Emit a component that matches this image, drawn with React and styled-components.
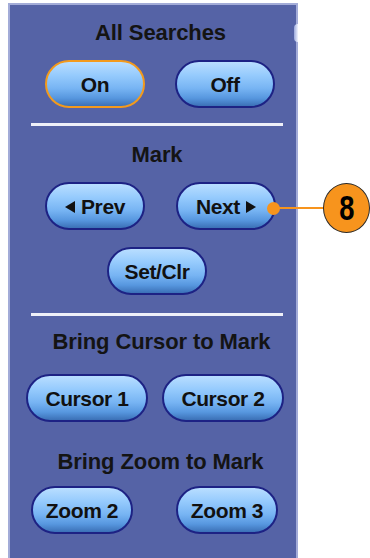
import React from "react";
import styled, { createGlobalStyle } from "styled-components";

const Global = createGlobalStyle`
  html, body {
    margin: 0;
    padding: 0;
    background: #ffffff;
    font-family: "Liberation Sans", Arial, sans-serif;
  }
`;

const Page = styled.div`
  position: relative;
  width: 370px;
  height: 558px;
  overflow: hidden;
  padding-top: 3px;
  box-sizing: border-box;
`;

const Panel = styled.div`
  position: relative;
  margin-left: 8px;
  width: 290px;
  height: 555px;
  box-sizing: border-box;
  background: #5563a6;
  border: 2px solid #a3acd8;
  border-bottom: none;
  padding-top: 15px;
  display: flex;
  flex-direction: column;
`;

// half hidden knob peeking out on the right edge
const ScrollKnob = styled.div`
  position: absolute;
  right: -2px;
  top: 19px;
  width: 4px;
  height: 18px;
  border-radius: 9px 0 0 9px;
  background: linear-gradient(to right, #9aa8dc, #f2f5fe);
`;

const Heading = styled.div`
  font-size: 22px;
  line-height: 26px;
  font-weight: bold;
  color: #141414;
  text-align: center;
  padding-left: ${(p) => p.$offset || 0}px;
  margin-top: ${(p) => p.$mt || 0}px;
  letter-spacing: -0.1px;
`;

const Row = styled.div`
  display: flex;
  gap: ${(p) => p.$gap}px;
  padding-left: ${(p) => p.$left}px;
  margin-top: ${(p) => p.$mt}px;
`;

const Button = styled.div`
  width: ${(p) => p.$w || 100}px;
  height: 48px;
  box-sizing: border-box;
  border-radius: 24px;
  border: 2px solid ${(p) => (p.$active ? "#f39a1c" : "#1d2284")};
  background: linear-gradient(
    to bottom,
    #b9deff 0%,
    #96cbfd 30%,
    #77b4f3 60%,
    #5797df 82%,
    #3b70b6 100%
  );
  display: flex;
  align-items: center;
  justify-content: center;
  gap: 6px;
  font-size: 21px;
  font-weight: bold;
  color: #111111;
  letter-spacing: -0.4px;
  padding-top: 1px;
`;

const Separator = styled.div`
  margin-top: ${(p) => p.$mt}px;
  margin-left: 21px;
  width: 252px;
  height: 3px;
  background: #eef0f8;
`;

const Callout = styled.div`
  position: absolute;
  left: 267px;
  top: 183px;
  display: flex;
  align-items: center;
`;

const Dot = styled.div`
  width: 13px;
  height: 13px;
  border-radius: 50%;
  background: #f7941d;
  flex-shrink: 0;
`;

const Leader = styled.div`
  width: 45px;
  height: 2px;
  margin-left: -2px;
  background: #f7941d;
`;

const Bubble = styled.div`
  width: 47px;
  height: 50px;
  box-sizing: border-box;
  border-radius: 50%;
  border: 1.5px solid #2a2a2a;
  background: #f7941d;
  display: flex;
  align-items: center;
  justify-content: center;
  font-size: 35px;
  font-weight: bold;
  color: #000;
  span {
    display: inline-block;
    transform: scaleX(0.78);
  }
`;

const Tri = ({ dir }) => (
  <svg width="10" height="12" viewBox="0 0 10 12">
    {dir === "left" ? (
      <polygon points="10,0 10,12 0,6" fill="#111" />
    ) : (
      <polygon points="0,0 0,12 10,6" fill="#111" />
    )}
  </svg>
);

export default function App() {
  return (
    <Page>
      <Global />
      <Panel>
        <ScrollKnob />
        <Heading $offset={15}>All Searches</Heading>
        <Row $left={35} $gap={30} $mt={14}>
          <Button $active>On</Button>
          <Button>Off</Button>
        </Row>
        <Separator $mt={15} />
        <Heading $offset={8} $mt={16}>Mark</Heading>
        <Row $left={35} $gap={31} $mt={14}>
          <Button>
            <Tri dir="left" />
            Prev
          </Button>
          <Button>
            Next
            <Tri dir="right" />
          </Button>
        </Row>
        <Row $left={97} $gap={0} $mt={17}>
          <Button>Set/Clr</Button>
        </Row>
        <Separator $mt={18} />
        <Heading $offset={17} $mt={13}>Bring Cursor to Mark</Heading>
        <Row $left={16} $gap={14} $mt={19}>
          <Button $w={122}>Cursor 1</Button>
          <Button $w={122}>Cursor 2</Button>
        </Row>
        <Heading $offset={15} $mt={27}>Bring Zoom to Mark</Heading>
        <Row $left={21} $gap={43} $mt={11}>
          <Button $w={102}>Zoom 2</Button>
          <Button $w={102}>Zoom 3</Button>
        </Row>
      </Panel>
      <Callout>
        <Dot />
        <Leader />
        <Bubble>
          <span>8</span>
        </Bubble>
      </Callout>
    </Page>
  );
}
